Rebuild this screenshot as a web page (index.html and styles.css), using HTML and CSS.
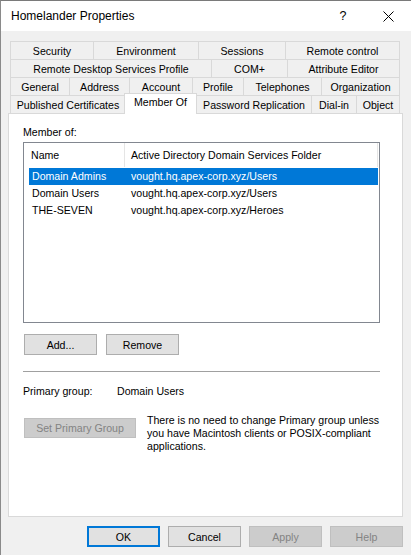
FILE: index.html
```html
<!DOCTYPE html>
<html lang="en">

<head>
    <meta charset="UTF-8">
    <meta name="viewport" content="width=device-width, initial-scale=1.0">
    <title>Homelander Properties</title>
    <link rel="stylesheet" href="styles.css">
</head>

<body>
    <div class="window">
        <div class="titlebar">
            <span class="title">Homelander Properties</span>
            <span class="help">?</span>
            <span class="close">
                <svg width="11" height="11" viewBox="0 0 11 11">
                    <path d="M0.5 0.5 L10.5 10.5 M10.5 0.5 L0.5 10.5" stroke="#000" stroke-width="1" fill="none"/>
                </svg>
            </span>
        </div>

        <div class="main">
            <div class="tabs">
                <div class="tab-row row-1">
                    <div class="tab">Security</div>
                    <div class="tab">Environment</div>
                    <div class="tab">Sessions</div>
                    <div class="tab">Remote control</div>
                </div>
                <div class="tab-row row-2">
                    <div class="tab">Remote Desktop Services Profile</div>
                    <div class="tab">COM+</div>
                    <div class="tab">Attribute Editor</div>
                </div>
                <div class="tab-row row-3">
                    <div class="tab">General</div>
                    <div class="tab">Address</div>
                    <div class="tab">Account</div>
                    <div class="tab">Profile</div>
                    <div class="tab">Telephones</div>
                    <div class="tab">Organization</div>
                </div>
                <div class="tab-row row-4">
                    <div class="tab">Published Certificates</div>
                    <div class="tab active">Member Of</div>
                    <div class="tab">Password Replication</div>
                    <div class="tab">Dial-in</div>
                    <div class="tab">Object</div>
                </div>
            </div>

            <div class="panel">
                <div class="label">Member of:</div>
                <div class="list">
                    <div class="list-header">
                        <div class="col-head">Name</div>
                        <div class="col-head">Active Directory Domain Services Folder</div>
                    </div>
                    <div class="list-row selected">
                        <span>Domain Admins</span>
                        <span class="folder">vought.hq.apex-corp.xyz/Users</span>
                    </div>
                    <div class="list-row">
                        <span>Domain Users</span>
                        <span class="folder">vought.hq.apex-corp.xyz/Users</span>
                    </div>
                    <div class="list-row">
                        <span>THE-SEVEN</span>
                        <span class="folder">vought.hq.apex-corp.xyz/Heroes</span>
                    </div>
                </div>

                <div class="list-buttons">
                    <button class="btn">Add...</button>
                    <button class="btn">Remove</button>
                </div>

                <div class="separator"></div>

                <div class="primary">
                    <span class="primary-label">Primary group:</span>
                    <span>Domain Users</span>
                </div>

                <div class="primary-set">
                    <button class="btn btn-wide" disabled>Set Primary Group</button>
                    <p class="note">There is no need to change Primary group unless<br>you have Macintosh clients or POSIX-compliant<br>applications.</p>
                </div>
            </div>

            <div class="dialog-buttons">
                <button class="btn default">OK</button>
                <button class="btn">Cancel</button>
                <button class="btn" disabled>Apply</button>
                <button class="btn" disabled>Help</button>
            </div>
        </div>
    </div>
</body>

</html>
```

FILE: styles.css
```css
* {
    box-sizing: border-box;
}

body {
    margin: 0;
    background-color: #f0f0f0;
    font-family: "Liberation Sans", Arial, sans-serif;
    font-size: 10.6px;
    color: #000;
}

.window {
    width: 411px;
    height: 555px;
    border-left: 1px solid #8a8a8a;
    border-top: 1px solid #7a7a7a;
    background-color: #f0f0f0;
    display: flex;
    flex-direction: column;
}

.titlebar {
    height: 30px;
    background-color: #ffffff;
    display: flex;
    align-items: center;
    padding-left: 10px;
    font-size: 12px;
}

.title {
    flex: 1;
}

.help {
    width: 30px;
    text-align: center;
    font-size: 12.5px;
    margin-right: 7px;
}

.close {
    width: 46px;
    height: 30px;
    display: flex;
    align-items: center;
    justify-content: center;
}

.main {
    padding: 10px 8px 0 7px;
}

/* tab strip */
.tabs {
    margin: 0 3px 0 2px;
}

.tab-row {
    display: grid;
    height: 18px;
}

.row-1 {
    grid-template-columns: 83px 105px 87px 1fr;
}

.row-2 {
    grid-template-columns: 201px 76px 1fr;
}

.row-3 {
    grid-template-columns: 59px 60px 63px 51px 78px 1fr;
}

.row-4 {
    grid-template-columns: 115px 71px 115px 45px 1fr;
}

.tab {
    display: flex;
    align-items: center;
    justify-content: center;
    border-top: 1px solid #d9d9d9;
    border-left: 1px solid #d9d9d9;
    background-color: #f0f0f0;
    white-space: nowrap;
}

.tab:last-child {
    border-right: 1px solid #d9d9d9;
}

.tab.active {
    position: relative;
    z-index: 1;
    margin: -2px -1px -1px -1px;
    padding-bottom: 4px;
    background-color: #ffffff;
    border-right: 1px solid #d9d9d9;
}

/* page body */
.panel {
    height: 404px;
    background-color: #ffffff;
    border: 1px solid #d9d9d9;
    padding: 12px 0 0 14px;
}

.label {
    line-height: 13px;
    margin-bottom: 3px;
}

.list {
    width: 357px;
    height: 181px;
    border: 1px solid #828790;
    background-color: #ffffff;
}

.list-header {
    display: grid;
    grid-template-columns: 101px 253px;
    height: 24px;
    margin-bottom: 1px;
}

.col-head {
    display: flex;
    align-items: center;
    padding-left: 7px;
    border-right: 1px solid #e5e5e5;
    white-space: nowrap;
}

.col-head + .col-head {
    padding-left: 6px;
}

.list-row {
    display: grid;
    grid-template-columns: 96px 1fr;
    height: 17px;
    line-height: 17px;
    margin: 0 1px 0 5px;
    padding-left: 3px;
}

.list-row .folder {
    padding-left: 3px;
}

.list-row.selected {
    background-color: #0078d7;
    color: #ffffff;
}

.btn {
    width: 73px;
    height: 21px;
    padding: 0;
    border: 1px solid #adadad;
    background-color: #e1e1e1;
    font-family: inherit;
    font-size: inherit;
    color: #000;
}

.btn:disabled {
    background-color: #cccccc;
    border-color: #bfbfbf;
    color: #838383;
}

.btn.default {
    border: 2px solid #0078d7;
}

.list-buttons {
    display: flex;
    gap: 9px;
    margin: 11px 0 0 1px;
}

.separator {
    width: 357px;
    height: 1px;
    background-color: #a0a0a0;
    margin-top: 16px;
}

.primary {
    display: flex;
    line-height: 13px;
    margin-top: 13px;
}

.primary-label {
    width: 94px;
}

.primary-set {
    display: flex;
    align-items: flex-start;
    gap: 11px;
    margin: 16px 0 0 1px;
}

.btn-wide {
    width: 112px;
    height: 20px;
    margin-top: 4px;
}

.note {
    margin: 0;
    line-height: 13px;
}

.dialog-buttons {
    display: flex;
    justify-content: flex-end;
    gap: 8px;
    margin-top: 9px;
}
```
